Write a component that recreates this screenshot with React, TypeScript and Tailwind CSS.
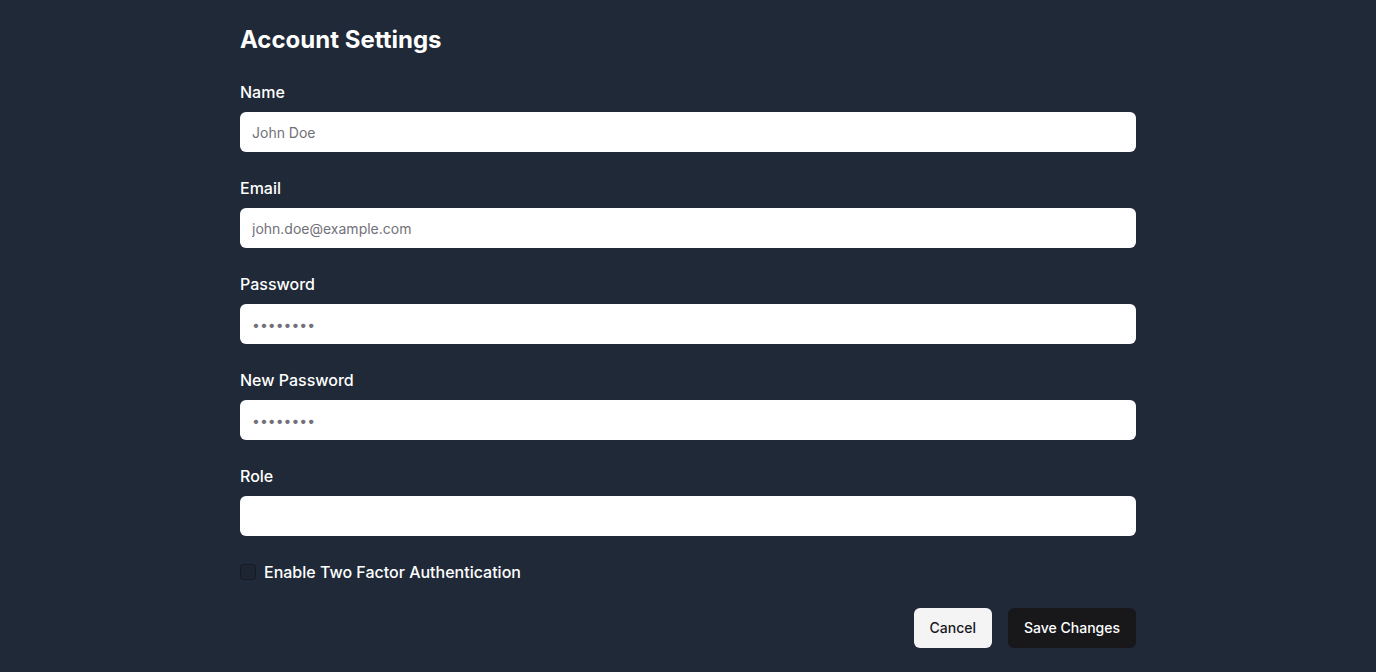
import React, { useState } from 'react';

const fields = [
    { label: 'Name', placeholder: 'John Doe' },
    { label: 'Email', placeholder: 'john.doe@example.com' },
    { label: 'Password', placeholder: '••••••••' },
    { label: 'New Password', placeholder: '••••••••' },
    { label: 'Role', placeholder: '' },
];

const App = () => {
    const [twoFactor, setTwoFactor] = useState<boolean>(false);

    return (
        <div className="min-h-screen bg-[#1f2937] text-white font-['Inter',sans-serif]">
            <div className="mx-auto max-w-4xl pt-6 pb-6">
                <h1 className="text-2xl font-bold leading-8 mb-6">Account Settings</h1>
                <form className="flex flex-col gap-6" onSubmit={(e) => e.preventDefault()}>
                    {fields.map((f) => (
                        <div key={f.label} className="flex flex-col">
                            <label className="text-base font-medium leading-6 mb-2">{f.label}</label>
                            <input
                                type="text"
                                placeholder={f.placeholder}
                                className="h-10 w-full rounded-md bg-white px-3 text-sm text-[#18181b] placeholder:text-[#71717a] focus:outline-none"
                            />
                        </div>
                    ))}
                    <label className="flex items-center gap-2 h-6">
                        <input
                            type="checkbox"
                            checked={twoFactor}
                            onChange={(e) => setTwoFactor(e.target.checked)}
                            className="appearance-none h-4 w-4 rounded-[3px] border border-[#151b26] bg-[#1d2533]"
                        />
                        <span className="text-base font-medium leading-6">Enable Two Factor Authentication</span>
                    </label>
                    <div className="flex justify-end gap-4">
                        <button type="button" className="h-10 rounded-md bg-[#f4f4f5] px-4 text-sm font-medium text-[#18181b]">Cancel</button>
                        <button type="submit" className="h-10 rounded-md bg-[#18181b] px-4 text-sm font-medium text-white">Save Changes</button>
                    </div>
                </form>
            </div>
        </div>
    );
};

export default App;
